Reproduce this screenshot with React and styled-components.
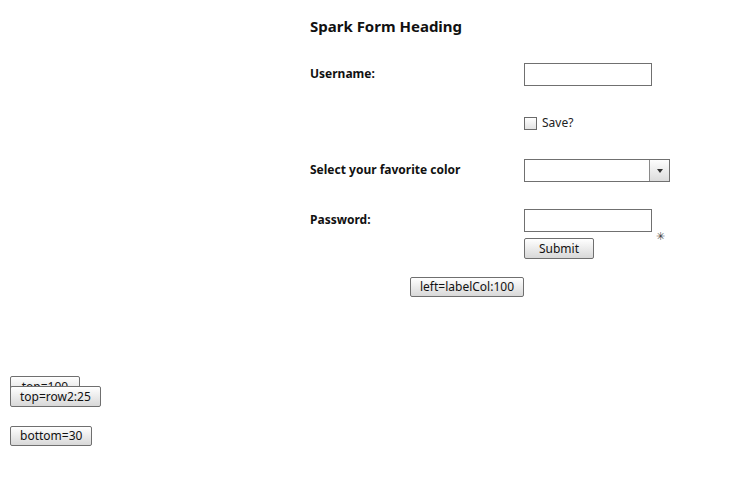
import React from 'react'
import styled, { createGlobalStyle } from 'styled-components'

const GlobalStyle = createGlobalStyle`
  html, body {
    margin: 0;
    padding: 0;
    background: #fff;
  }
  body {
    font-family: "Noto Sans", "Open Sans", sans-serif;
    color: #000;
  }
`

const Page = styled.div`
  width: 735px;
  height: 486px;
  overflow: hidden;
`

const FormArea = styled.div`
  margin-left: 310px;
  padding-top: 16px;
`

const Heading = styled.h1`
  margin: 0;
  font-size: 15px;
  font-weight: 700;
  line-height: 20px;
  color: #111;
`

const FormItem = styled.div`
  display: flex;
  align-items: flex-start;
  margin-top: ${(props) => props.top}px;
`

const Label = styled.div`
  width: 214px;
  flex-shrink: 0;
  font-size: 12px;
  font-weight: 700;
  line-height: ${(props) => props.lh || 22}px;
  color: #111;
`

const Controls = styled.div`
  display: flex;
  flex-direction: column;
  gap: 6px;
`

const InputRow = styled.div`
  display: flex;
  align-items: flex-end;
`

const TextInput = styled.div`
  width: 126px;
  height: 21px;
  border: 1px solid #707070;
  background: #fff;
`

const Required = styled.span`
  font-size: 11px;
  line-height: 10px;
  color: #444;
  margin: 0 0 -9px 4px;
`

const CheckRow = styled.label`
  display: flex;
  align-items: center;
  gap: 5px;
  font-size: 12px;
  color: #222;
  line-height: 16px;
`

const CheckBox = styled.span`
  width: 11px;
  height: 11px;
  border: 1px solid #6a6a6a;
  background: linear-gradient(#fff, #e2e2e2);
`

const Combo = styled.div`
  display: flex;
  width: 144px;
  height: 21px;
  border: 1px solid #707070;
  background: #fff;
`

const ComboField = styled.div`
  flex: 1;
`

const ComboArrow = styled.div`
  width: 19px;
  border-left: 1px solid #8a8a8a;
  background: linear-gradient(#fdfdfd, #dcdcdc);
  display: flex;
  align-items: center;
  justify-content: center;
  &::after {
    content: '';
    border-left: 3.5px solid transparent;
    border-right: 3.5px solid transparent;
    border-top: 4px solid #333;
  }
`

const Button = styled.button`
  box-sizing: border-box;
  height: ${(props) => props.h || 21}px;
  padding: 0 9px;
  border: 1px solid #6f6f6f;
  border-radius: 2px;
  background: linear-gradient(#ffffff, #d8d8d8);
  font-family: "Noto Sans", "Open Sans", sans-serif;
  font-size: 12px;
  line-height: 18px;
  color: #111;
  white-space: nowrap;
  cursor: pointer;
`

const SubmitButton = styled(Button)`
  width: 70px;
`

const ColButton = styled(Button)`
  margin: 18px 0 0 100px;
  width: 114px;
`

const SideStack = styled.div`
  display: flex;
  flex-direction: column;
  align-items: flex-start;
  margin: 79px 0 0 10px;
`

const HiddenButton = styled(Button)`
  width: 70px;
  overflow: hidden;
`

const OverButton = styled(Button)`
  margin-top: -11px;
  position: relative;
`

const BottomButton = styled(Button)`
  margin-top: 19px;
  height: 20px;
`

export default function App() {
  return (
    <Page>
      <GlobalStyle />
      <FormArea>
        <Heading>Spark Form Heading</Heading>
        <FormItem top={27}>
          <Label>Username:</Label>
          <TextInput />
        </FormItem>
        <FormItem top={29}>
          <Label lh={16} />
          <CheckRow>
            <CheckBox />
            Save?
          </CheckRow>
        </FormItem>
        <FormItem top={28}>
          <Label>Select your favorite color</Label>
          <Combo>
            <ComboField />
            <ComboArrow />
          </Combo>
        </FormItem>
        <FormItem top={27}>
          <Label>Password:</Label>
          <Controls>
            <InputRow>
              <TextInput />
              <Required>&#10035;</Required>
            </InputRow>
            <SubmitButton>Submit</SubmitButton>
          </Controls>
        </FormItem>
        <ColButton h={20}>left=labelCol:100</ColButton>
      </FormArea>
      <SideStack>
        <HiddenButton>top=100</HiddenButton>
        <OverButton>top=row2:25</OverButton>
        <BottomButton>bottom=30</BottomButton>
      </SideStack>
    </Page>
  )
}
